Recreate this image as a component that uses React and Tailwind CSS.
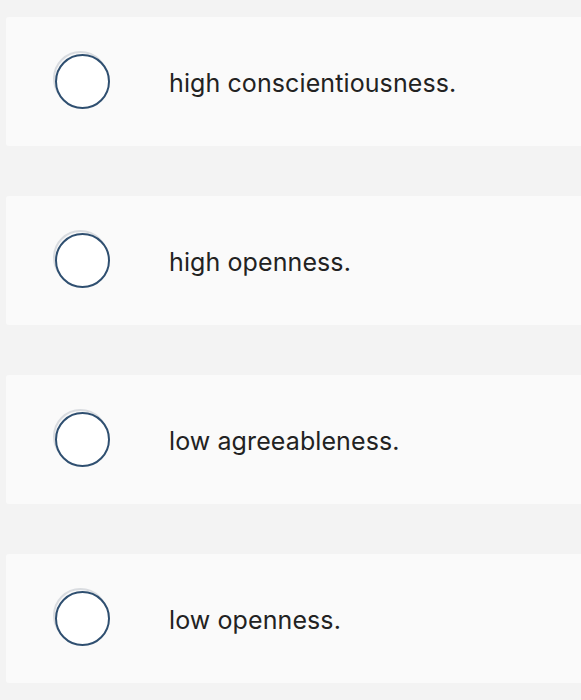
import React from 'react';

const options = [
  'high conscientiousness.',
  'high openness.',
  'low agreeableness.',
  'low openness.',
];

const Radio = () => (
  <div className="relative w-[55px] h-[55px] shrink-0">
    <div className="absolute -left-[2px] -top-[3px] w-[55px] h-[55px] rounded-full border-2 border-[#d9dce0]" />
    <div className="absolute inset-0 rounded-full border-2 border-[#2f4f70] bg-white" />
  </div>
);

export default function App() {
  return (
    <div className="min-h-[700px] bg-[#f3f3f3] pt-[17px] pl-[6px] font-['Inter',sans-serif]">
      <div className="flex flex-col gap-[50px]">
        {options.map((label, i) => (
          <div key={i} className="h-[129px] bg-[#fafafa] rounded-l-[3px] flex items-center pl-[49px]">
            <Radio />
            <span className="ml-[59px] pt-[4px] text-[25px] tracking-[0.1px] text-[#222] leading-none">{label}</span>
          </div>
        ))}
      </div>
    </div>
  );
}
